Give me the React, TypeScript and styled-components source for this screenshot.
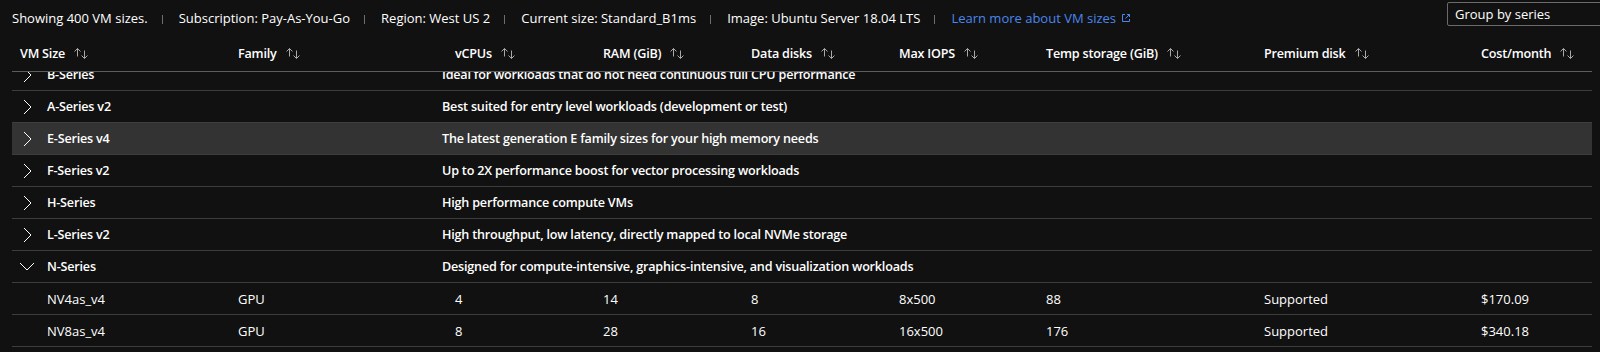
import React, { useLayoutEffect, useRef } from 'react'
import styled, { createGlobalStyle } from 'styled-components'

const GlobalStyle = createGlobalStyle`
  html, body {
    margin: 0;
    padding: 0;
    background: #111111;
    overflow: hidden;
  }
  body {
    font-family: 'Segoe UI', 'Open Sans', 'Noto Sans', sans-serif;
    font-size: 13px;
    color: #ffffff;
  }
`

const COLUMNS = '218px 217px 148px 148px 148px 147px 218px 217px 1fr'

const Page = styled.div`
  width: 1600px;
  height: 352px;
  display: flex;
  flex-direction: column;
`

const InfoBar = styled.div`
  height: 36px;
  display: flex;
  align-items: flex-start;
  padding-left: 12px;
  flex-shrink: 0;
`

const InfoItems = styled.div`
  display: flex;
  align-items: center;
  height: 36px;
`

const InfoText = styled.span`
  white-space: nowrap;
  color: #ffffff;
`

const Divider = styled.span`
  width: 1px;
  height: 9px;
  background: #6e6e6e;
  margin: 2px 16px 0 14px;
`

const LearnLink = styled.a`
  color: #4a86ee;
  text-decoration: none;
  display: inline-flex;
  align-items: center;
  gap: 5px;
  white-space: nowrap;
`

const GroupSelect = styled.div`
  margin-left: auto;
  margin-top: 2px;
  margin-right: -6px;
  width: 150px;
  height: 22px;
  border: 1px solid #6b6b6b;
  border-radius: 2px;
  display: flex;
  align-items: center;
  padding-left: 7px;
  flex-shrink: 0;
  color: #ffffff;
`

const Table = styled.div`
  margin: 0 8px 0 12px;
  display: flex;
  flex-direction: column;
  flex: 1;
  min-height: 0;
`

const HeaderRow = styled.div`
  display: grid;
  grid-template-columns: ${COLUMNS};
  height: 35px;
  border-bottom: 1px solid #5c5c5c;
  flex-shrink: 0;
`

const HeaderCell = styled.div`
  display: flex;
  align-items: center;
  padding-left: 8px;
  font-weight: 600;
  font-size: 12.6px;
  letter-spacing: -0.2px;
  white-space: nowrap;
  gap: 8px;
`

const Body = styled.div`
  flex: 1;
  overflow-y: auto;
  scrollbar-width: none;
  &::-webkit-scrollbar {
    display: none;
  }
`

const SeriesRow = styled.div<{ $active?: boolean }>`
  display: grid;
  grid-template-columns: 430px 1fr;
  height: 31px;
  border-bottom: 1px solid #3d3d3d;
  background: ${({ $active }) => ($active ? '#333333' : 'transparent')};
  font-weight: 600;
  font-size: 12.6px;
  letter-spacing: -0.2px;
`

const SeriesName = styled.div`
  display: flex;
  align-items: center;
  padding-left: 11px;
  gap: 15px;
  white-space: nowrap;
`

const SeriesDesc = styled.div`
  display: flex;
  align-items: center;
  white-space: nowrap;
`

const DataRow = styled.div`
  display: grid;
  grid-template-columns: ${COLUMNS};
  height: 31px;
  border-bottom: 1px solid #3d3d3d;
`

const DataCell = styled.div<{ $indent?: boolean }>`
  display: flex;
  align-items: center;
  padding-left: ${({ $indent }) => ($indent ? '35px' : '8px')};
  white-space: nowrap;
`

const ChevronBox = styled.span`
  width: 9px;
  display: inline-flex;
  justify-content: center;
`

const SortIcon = () => (
  <svg width="16" height="13" viewBox="0 0 16 13" fill="none" stroke="#a8a8a8" strokeWidth="1">
    <path d="M4.5 1.5V9.5M1.5 4.5L4.5 1.5L7.5 4.5" />
    <path d="M11.5 3.5V11.5M8.5 8.5L11.5 11.5L14.5 8.5" />
  </svg>
)

const ChevronRight = () => (
  <svg width="9" height="16" viewBox="0 0 9 16" fill="none" stroke="#ffffff" strokeWidth="1">
    <path d="M1 1L8 8L1 15" />
  </svg>
)

const ChevronDown = () => (
  <svg width="16" height="9" viewBox="0 0 16 9" fill="none" stroke="#ffffff" strokeWidth="1" style={{ marginLeft: -4, marginRight: -3 }}>
    <path d="M1 1L8 8L15 1" />
  </svg>
)

const ExternalIcon = () => (
  <svg width="10" height="10" viewBox="0 0 10 10" fill="none" stroke="#4a86ee" strokeWidth="1">
    <path d="M4 1.5H1.5V8.5H8.5V6" />
    <path d="M6 1.5H8.5V4M8.5 1.5L4.5 5.5" />
  </svg>
)

const headers = [
  'VM Size',
  'Family',
  'vCPUs',
  'RAM (GiB)',
  'Data disks',
  'Max IOPS',
  'Temp storage (GiB)',
  'Premium disk',
  'Cost/month',
]

const series = [
  { name: 'B-Series', desc: 'Ideal for workloads that do not need continuous full CPU performance' },
  { name: 'A-Series v2', desc: 'Best suited for entry level workloads (development or test)' },
  { name: 'E-Series v4', desc: 'The latest generation E family sizes for your high memory needs', active: true },
  { name: 'F-Series v2', desc: 'Up to 2X performance boost for vector processing workloads' },
  { name: 'H-Series', desc: 'High performance compute VMs' },
  { name: 'L-Series v2', desc: 'High throughput, low latency, directly mapped to local NVMe storage' },
  { name: 'N-Series', desc: 'Designed for compute-intensive, graphics-intensive, and visualization workloads', open: true },
]

const sizes = [
  ['NV4as_v4', 'GPU', '4', '14', '8', '8x500', '88', 'Supported', '$170.09'],
  ['NV8as_v4', 'GPU', '8', '28', '16', '16x500', '176', 'Supported', '$340.18'],
  ['NV16as_v4', 'GPU', '16', '56', '32', '32x500', '352', 'Supported', '$680.36'],
]

const info = [
  'Showing 400 VM sizes.',
  'Subscription: Pay-As-You-Go',
  'Region: West US 2',
  'Current size: Standard_B1ms',
  'Image: Ubuntu Server 18.04 LTS',
]

export default function App() {
  const bodyRef = useRef<HTMLDivElement>(null)

  useLayoutEffect(() => {
    // list is scrolled a little, B-Series is cut at the top
    if (bodyRef.current) bodyRef.current.scrollTop = 13
  }, [])

  return (
    <Page>
      <GlobalStyle />
      <InfoBar>
        <InfoItems>
          {info.map((text) => (
            <React.Fragment key={text}>
              <InfoText>{text}</InfoText>
              <Divider />
            </React.Fragment>
          ))}
          <LearnLink href="#">
            Learn more about VM sizes
            <ExternalIcon />
          </LearnLink>
        </InfoItems>
        <GroupSelect>Group by series</GroupSelect>
      </InfoBar>
      <Table>
        <HeaderRow>
          {headers.map((h) => (
            <HeaderCell key={h}>
              {h}
              <SortIcon />
            </HeaderCell>
          ))}
        </HeaderRow>
        <Body ref={bodyRef}>
          {series.map((s) => (
            <React.Fragment key={s.name}>
              <SeriesRow $active={s.active}>
                <SeriesName>
                  <ChevronBox>{s.open ? <ChevronDown /> : <ChevronRight />}</ChevronBox>
                  {s.name}
                </SeriesName>
                <SeriesDesc>{s.desc}</SeriesDesc>
              </SeriesRow>
              {s.open &&
                sizes.map((row) => (
                  <DataRow key={row[0]}>
                    {row.map((v, i) => (
                      <DataCell key={i} $indent={i === 0}>
                        {v}
                      </DataCell>
                    ))}
                  </DataRow>
                ))}
            </React.Fragment>
          ))}
        </Body>
      </Table>
    </Page>
  )
}
